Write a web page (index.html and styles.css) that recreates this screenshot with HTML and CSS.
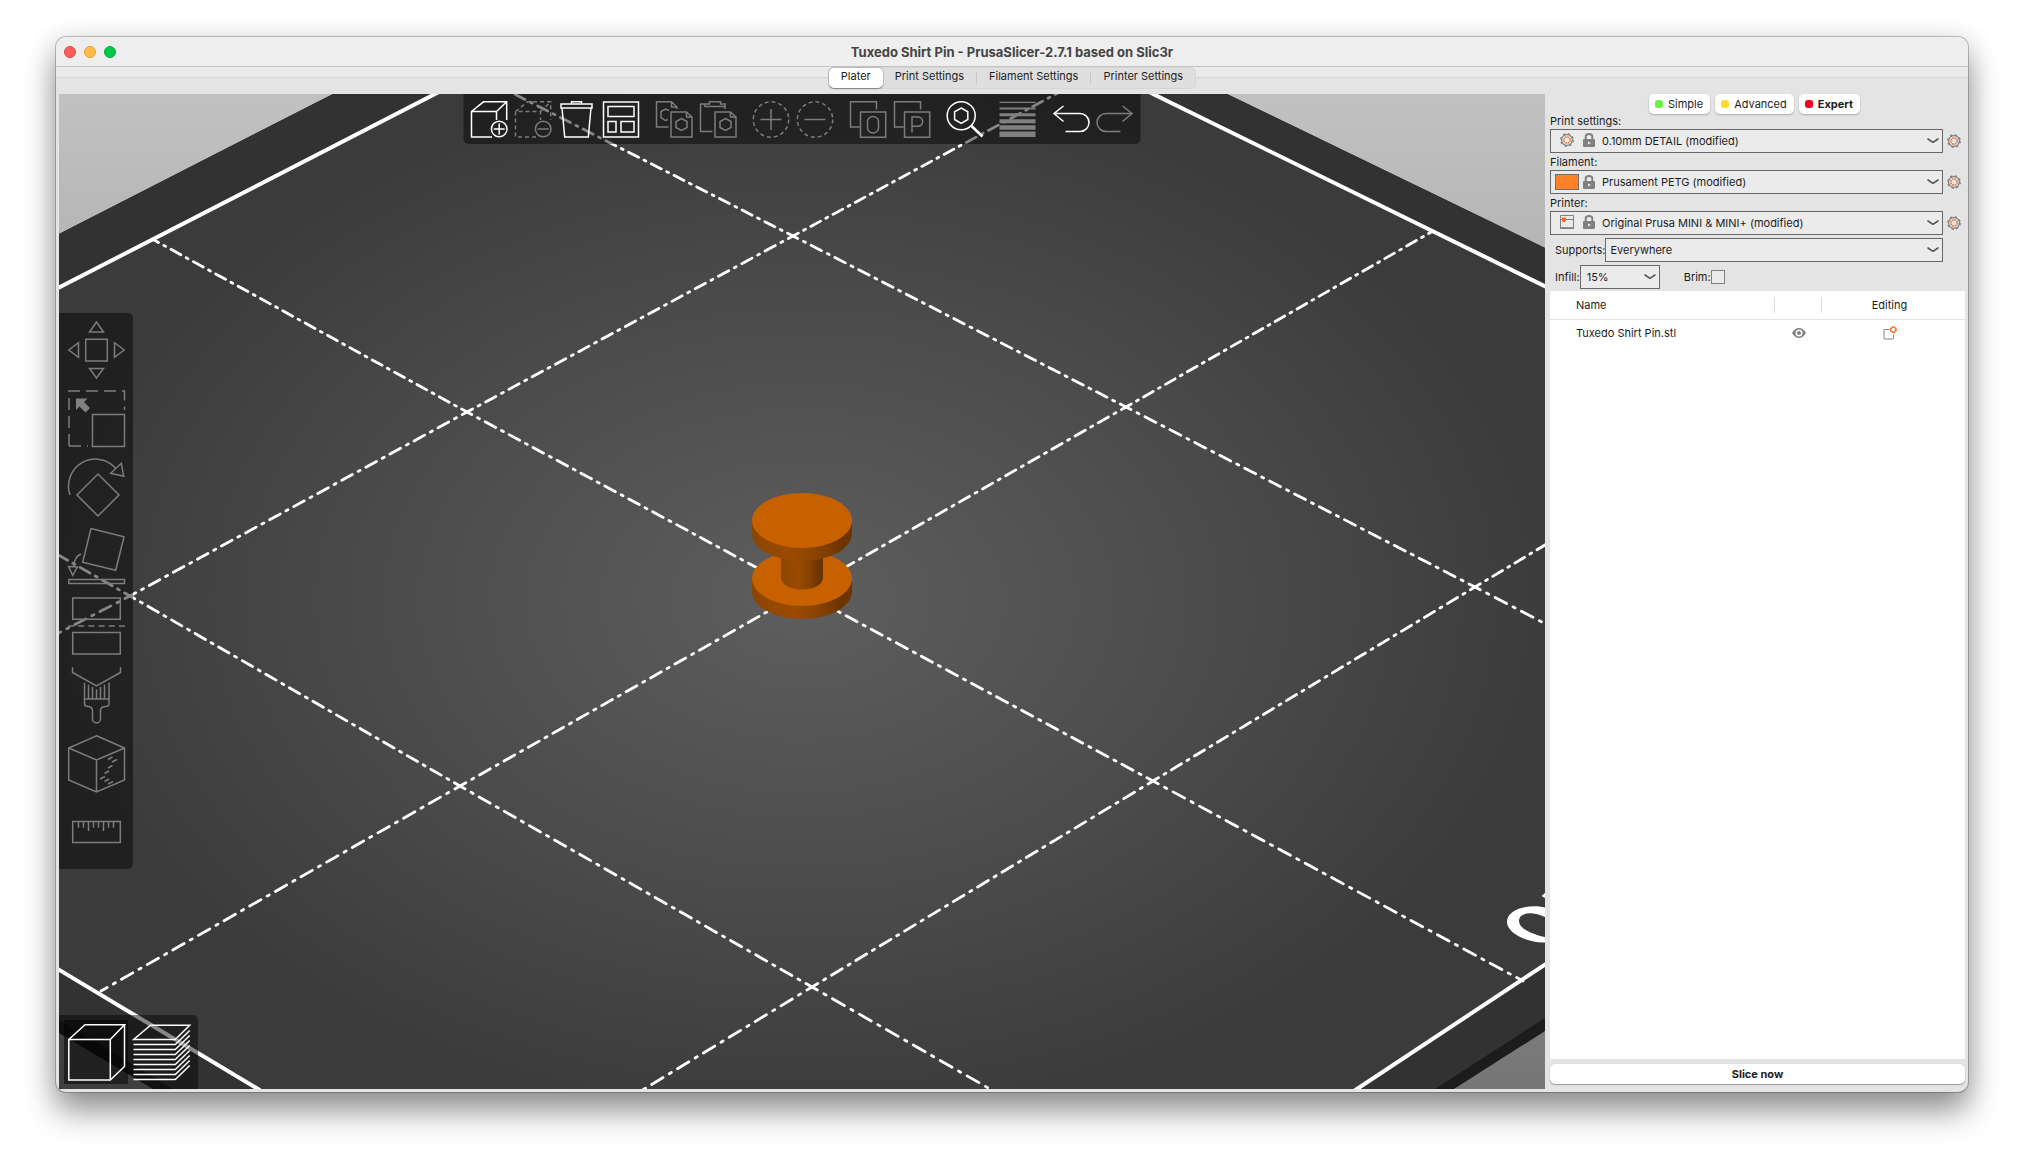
FILE: index.html
```html
<!DOCTYPE html>
<html lang="en">
<head>
<meta charset="utf-8">
<title>Tuxedo Shirt Pin - PrusaSlicer-2.7.1 based on Slic3r</title>
<link rel="stylesheet" href="styles.css">
</head>
<body>
<svg class="defs" aria-hidden="true">
  <symbol id="cog" viewBox="0 0 14 14">
    <circle cx="7" cy="7" r="5.4" fill="none" stroke="#808080" stroke-width="1.2"/>
    <circle cx="7" cy="7" r="6.2" fill="none" stroke="#808080" stroke-width="1.4" stroke-dasharray="2.4 2.47"/>
    <circle cx="7" cy="7" r="3.2" fill="none" stroke="#ed6b21" stroke-width="1.3" stroke-dasharray="1.8 .7"/>
  </symbol>
  <symbol id="lock" viewBox="0 0 12 14">
    <path d="M2.700 7V3.600Q2.700 1 6 1T9.300 3.600V7" fill="none" stroke="#808080" stroke-width="2"/>
    <rect y="6" width="12" height="8" rx="1" fill="#808080"/>
    <path d="M5 8.500 8 10 5 11.500Z" fill="#ebebeb"/>
  </symbol>
  <symbol id="chevron" viewBox="0 0 12 6">
    <path d="M1 1 6 4.300 11 1" fill="none" stroke="#555" stroke-width="1.6" stroke-linecap="round" stroke-linejoin="round"/>
  </symbol>
</svg>

<div class="window">
  <header class="titlebar">
    <div class="lights">
      <button class="light close" aria-label="Close"></button>
      <button class="light minimize" aria-label="Minimize"></button>
      <button class="light zoom" aria-label="Zoom"></button>
    </div>
    <h1 class="title">Tuxedo Shirt Pin - PrusaSlicer-2.7.1 based on Slic3r</h1>
  </header>

  <nav class="tabstrip">
    <div class="tabs">
      <button class="tab active">Plater</button>
      <button class="tab">Print Settings</button>
      <button class="tab ruled">Filament Settings</button>
      <button class="tab ruled">Printer Settings</button>
    </div>
  </nav>

  <main class="main">
    <section class="scene" aria-label="3D view">
      <svg class="bed" viewBox="59 94 1486 995" preserveAspectRatio="xMidYMid slice">
        <defs>
          <linearGradient id="sky" x1="0" y1="0" x2="0" y2="1">
            <stop offset="0" stop-color="#c1c1c1"/><stop offset="1" stop-color="#767676"/>
          </linearGradient>
          <radialGradient id="plate" gradientUnits="userSpaceOnUse" cx="0" cy="0" r="1" gradientTransform="translate(802 600) scale(760 530)">
            <stop offset="0" stop-color="#5e5e5e"/><stop offset=".5" stop-color="#4d4d4d"/><stop offset="1" stop-color="#3b3b3b"/>
          </radialGradient>
          <linearGradient id="rim" x1="0" y1="0" x2="1" y2="0">
            <stop offset="0" stop-color="#8c4500"/><stop offset=".4" stop-color="#994b00"/><stop offset=".65" stop-color="#8a4300"/><stop offset=".9" stop-color="#6b3400"/>
          </linearGradient>
        </defs>
        <rect x="59" y="94" width="1486" height="995" fill="url(#sky)"/>
        <path fill="#1c1c1c" d="M59 234 333 94H1227L1545 248V1031L1454 1089H153L59 1033Z"/>
        <path fill="#323232" d="M59 234 333 94H1227L1545 248V1018L1435 1089H173L59 1020Z"/>
        <path fill="url(#plate)" stroke="#fff" stroke-width="4" d="M31 302 435 94 794 -90 1153 94 1573 300V946L1357 1089 802 1450 258 1089 31 953Z"/>
        <g class="grid">
          <path pathLength="350" d="M154 240 467 412"/><path pathLength="350" d="M467 412 802 592"/><path pathLength="350" d="M802 592 1153 781"/><path pathLength="350" d="M1153 781 1523 981"/>
          <path pathLength="350" d="M475 74 793 236"/><path pathLength="350" d="M793 236 1126 407"/><path pathLength="350" d="M1126 407 1475 587"/><path pathLength="350" d="M1475 587 1844 780"/>
          <path pathLength="350" d="M-182 417 130 596"/><path pathLength="350" d="M130 596 460 786"/><path pathLength="350" d="M460 786 812 987"/><path pathLength="350" d="M812 987 1189 1203"/>
          <path pathLength="350" d="M1433 231 1126 407"/><path pathLength="350" d="M1126 407 802 592"/><path pathLength="350" d="M802 592 460 786"/><path pathLength="350" d="M460 786 101 991"/>
          <path pathLength="350" d="M1104 68 793 236"/><path pathLength="350" d="M793 236 467 412"/><path pathLength="350" d="M467 412 130 596"/><path pathLength="350" d="M130 596 -221 778"/>
          <path pathLength="350" d="M1785 401 1475 587"/><path pathLength="350" d="M1475 587 1153 781"/><path pathLength="350" d="M1153 781 812 987"/><path pathLength="350" d="M812 987 450 1207"/>
        </g>
        <path fill="#fff" d="M1545 907.500C1530 904 1507 908 1507 922 1507 934 1530 943.500 1545 942.500V937C1534 935 1519 929 1519 921 1519 912 1533 911 1545 917ZM1541.500 896 1545 893V898Z"/>
        <path fill="url(#rim)" d="M752 578.500V591.500A50 27.500 0 0 0 852 591.500V578.500Z"/>
        <ellipse cx="802" cy="578.500" rx="50" ry="27.500" fill="#c76100"/>
        <path fill="url(#rim)" d="M781 540V578A21 11.600 0 0 0 823 578V540Z"/>
        <path fill="url(#rim)" d="M752 520.500V533.500A50 27.500 0 0 0 852 533.500V520.500Z"/>
        <ellipse cx="802" cy="520.500" rx="50" ry="27.500" fill="#c76100"/>
      </svg>

      <div class="toolbar top">
        <div class="group">
          <button class="tool" aria-label="Add"><svg viewBox="0 0 37 37"><path d="M21.500 36H1V10.500H26V19M1 10.500 13 .8H36.200V19M26 10.500 36.200.8"/><circle cx="28.700" cy="28" r="7.800"/><path d="M28.700 22.500V33.500M23.200 28H34.200"/></svg></button>
          <button class="tool dim" aria-label="Delete"><svg viewBox="0 0 37 37"><path stroke-dasharray="4 3" d="M21.500 36H1V10.500H26V19M1 10.500 13 .8H36.200V19M26 10.500 36.200.8"/><circle cx="28.700" cy="28" r="7.800"/><path d="M23.200 28H34.200"/></svg></button>
          <button class="tool" aria-label="Delete all"><svg viewBox="0 0 37 37"><path d="M2.500 3H33.500V7H2.500ZM13 3V.8H23V3M3.500 7 6.200 36H29.800L32.500 7"/></svg></button>
          <button class="tool" aria-label="Arrange"><svg viewBox="0 0 37 37"><path d="M1 1H36V36H1ZM5.500 5.500H31.500V15.500H5.500ZM5.500 20.500H13.500V31H5.500ZM18.500 20.500H31.500V31H18.500Z"/></svg></button>
        </div>
        <div class="group">
          <button class="tool dim" aria-label="Copy"><svg viewBox="0 0 37 37"><path d="M13 26H1V.8H16L21.500 6V8M16 .8V6H21.500M12.500 18.500 10 19.500 5.500 16.500V10.500L10 8 13.500 9.500M15.500 11H31L36.500 16V36H15.500ZM31 11V16H36.500M26 17.500 31.500 20.500V26.500L26 29.500 20.500 26.500V20.500Z"/></svg></button>
          <button class="tool dim" aria-label="Paste"><svg viewBox="0 0 37 37"><path d="M13 30.500H1V3H5.500M25 3H25.500V8M5.500 5.500V3H10V.8H21V3H25.500V5.500ZM15.500 11H31L36.500 16V36H15.500ZM31 11V16H36.500M26 17.500 31.500 20.500V26.500L26 29.500 20.500 26.500V20.500Z"/></svg></button>
        </div>
        <div class="group">
          <button class="tool dim" aria-label="Add instance"><svg viewBox="0 0 37 37"><circle cx="18.500" cy="18.500" r="17.700" stroke-dasharray="4 2.950"/><path d="M18.500 8V29M8 18.500H29"/></svg></button>
          <button class="tool dim" aria-label="Remove instance"><svg viewBox="0 0 37 37"><circle cx="18.500" cy="18.500" r="17.700" stroke-dasharray="4 2.950"/><path d="M8 18.500H29"/></svg></button>
        </div>
        <div class="group">
          <button class="tool dim" aria-label="Split to objects"><svg viewBox="0 0 37 37"><path d="M10 26H1V.8H27V8.500M11 11H36.200V36.200H11ZM18 20.500A5.500 5 0 0 1 29 20.500V27A5.500 5 0 0 1 18 27Z"/></svg></button>
          <button class="tool dim" aria-label="Split to parts"><svg viewBox="0 0 37 37"><path d="M10 26H1V.8H27V8.500M11 11H36.200V36.200H11ZM18.500 31.500V16H24.500A4.600 4.600 0 0 1 24.500 25.200H18.500"/></svg></button>
        </div>
        <div class="group">
          <button class="tool" aria-label="Search"><svg viewBox="0 0 37 37"><circle cx="14.700" cy="14.700" r="14"/><path d="M14.700 7 21.300 10.800V18.500L14.700 22.300 8.100 18.500V10.800Z"/><path stroke-width="2.600" d="M25 25 36 35.500"/></svg></button>
        </div>
        <div class="group">
          <button class="tool dim" aria-label="Variable layer height"><svg viewBox="0 0 37 37"><path fill="#808080" stroke="none" d="M0 .8H36V2H0ZM0 6.500H36V8.500H0ZM0 12.300H36V15.300H0ZM0 18.300H36V22.300H0ZM0 24.300H36V28.800H0ZM0 30.500H36V36H0Z"/></svg></button>
        </div>
        <div class="group">
          <button class="tool" aria-label="Undo"><svg viewBox="0 0 37 37"><path d="M11 5 1.500 12.500 11 20.500M1.500 12.500H27.500A9 9 0 0 1 27.500 30.500H13"/></svg></button>
          <button class="tool dim" aria-label="Redo"><svg viewBox="0 0 37 37"><path d="M26 5 35.500 12.500 26 20.500M35.500 12.500H9.500A9 9 0 0 0 9.500 30.500H24"/></svg></button>
        </div>
      </div>

      <div class="toolbar left">
        <button class="tool big dim" aria-label="Move"><svg viewBox="0 0 57 57"><path d="M17.700 18.300H39.300V40H17.700ZM28.500 1 21.500 11H35.500ZM28.500 57 21.500 47.500H35.500ZM.8 29 10.500 21.700V36.300ZM56.200 29 46.500 21.700V36.300Z"/></svg></button>
        <button class="tool big dim" aria-label="Scale"><svg viewBox="0 0 57 57"><path stroke-dasharray="12 6" d="M1 56V1H56.500V20M1 56H20"/><path d="M24.500 24.500H56.500V56.500H24.500Z"/><path fill="#808080" stroke="none" d="M8 8.500H19.500L16 12 22 18 17.500 22.500 11.500 16.500 8 20Z"/></svg></button>
        <button class="tool big dim" aria-label="Rotate"><svg viewBox="0 0 57 57"><path d="M2 36A27 27 0 0 1 47.500 9M53.300 4.300 42.700 14.300 55.700 17.300ZM30 15 51 36 30 57 9 36Z"/></svg></button>
        <button class="tool big dim" aria-label="Place on face"><svg viewBox="0 0 57 57"><path d="M23 .6 56 8.700 47.700 42.300 14.700 34.300ZM13 26Q7 28 5.500 38M.5 38.500 9.300 39 4.700 47.300ZM.8 51.500H56.500V55.500H.8Z"/></svg></button>
        <button class="tool big dim" aria-label="Cut"><svg viewBox="0 0 57 57"><path d="M4.700 1H52.300V22.300H4.700ZM4.700 35.500H52.300V57H4.700Z"/><path stroke-dasharray="6 4.200" d="M0 29H57"/></svg></button>
        <button class="tool big dim" aria-label="Paint-on supports"><svg viewBox="0 0 57 57"><path d="M4.500 1.300V6.500L28.500 20 52.500 6.500V1.300M16.500 33H41M16.500 16.700V37.500Q16.500 40.500 19.500 40.500 24.500 40.500 24.500 45V53A4 4 0 0 0 32.500 53V45Q32.500 40.500 37.500 40.500 41 40.500 41 37.500V16.700M20.500 18.700V33M24.500 21V33M28.500 23.300V33M32.500 21V33M36.500 18.700V33"/></svg></button>
        <button class="tool big dim" aria-label="Seam painting"><svg viewBox="0 0 57 57"><path d="M28.500.7 56.500 13V45L28.500 57 .7 45V13ZM.7 13 28.500 25 56.500 13M28.500 25V57"/><path d="M40 24.500 44.500 22M44 27 49 24.500M40 33 44.500 30.500M36.500 38.500 41 36M32 44 37 41.500M36.500 46.500 41 44M40 49 45 46.500"/></svg></button>
        <button class="tool big dim" aria-label="Measure"><svg viewBox="0 0 57 57"><path d="M4.700 17.500H52.300V38.500H4.700ZM10.500 17.500V23.700M15.500 17.500V23.700M20.500 17.500V27M25.500 17.500V23.700M30.500 17.500V23.700M35.500 17.500V27M40.500 17.500V23.700M45.500 17.500V23.700"/></svg></button>
      </div>

      <div class="toolbar views">
        <button class="view selected" aria-label="3D editor view"><svg viewBox="0 0 57 57"><path d="M.8 15.500H42.300V56H.8ZM.8 15.500 17 .8H56.500L42.300 15.500M56.500.8V42.500L42.300 56"/></svg></button>
        <button class="view" aria-label="Preview"><svg viewBox="0 0 57 57"><path d="M17.500 1.300H56.700L42.300 15.500H.7ZM.5 20.500H42.300L56.700 6.500M.5 25.500H42.300L56.700 11.500M.5 30.500H42.300L56.700 16.500M.5 35.500H42.300L56.700 21.500M.5 40.500H42.300L56.700 26.500M.5 45.500H42.300L56.700 31.500M.5 50.500H42.300L56.700 36.500M.5 55.500H42.300L56.700 41.500"/></svg></button>
      </div>
    </section>

    <aside class="sidebar">
      <div class="modes">
        <button class="mode"><span class="dot simple"></span>Simple</button>
        <button class="mode"><span class="dot advanced"></span>Advanced</button>
        <button class="mode current"><span class="dot expert"></span>Expert</button>
      </div>

      <div class="preset">
        <label for="print">Print settings:</label>
        <div class="preset-row">
          <div class="combo with-icons">
            <select id="print"><option>0.10mm DETAIL (modified)</option></select>
            <span class="marks"><svg class="mark"><use href="#cog"/></svg><svg class="lock"><use href="#lock"/></svg></span>
            <svg class="chevron"><use href="#chevron"/></svg>
          </div>
          <button class="edit" aria-label="Edit print settings"><svg><use href="#cog"/></svg></button>
        </div>
      </div>
      <div class="preset">
        <label for="filament">Filament:</label>
        <div class="preset-row">
          <div class="combo with-icons">
            <select id="filament"><option>Prusament PETG (modified)</option></select>
            <span class="marks"><span class="swatch"></span><svg class="lock"><use href="#lock"/></svg></span>
            <svg class="chevron"><use href="#chevron"/></svg>
          </div>
          <button class="edit" aria-label="Edit filament"><svg><use href="#cog"/></svg></button>
        </div>
      </div>
      <div class="preset">
        <label for="printer">Printer:</label>
        <div class="preset-row">
          <div class="combo with-icons">
            <select id="printer"><option>Original Prusa MINI &amp; MINI+ (modified)</option></select>
            <span class="marks"><svg class="mark" viewBox="0 0 14 14"><path d="M.5.5H13.500V13H.5ZM.5 4.500H13.500" fill="none" stroke="#808080"/><path d="M0 12.300H14V14H0Z" fill="#808080"/><path d="M2 2.500H6V6.500H5L4 7.500 3 6.500H2Z" fill="#ed6b21"/></svg><svg class="lock"><use href="#lock"/></svg></span>
            <svg class="chevron"><use href="#chevron"/></svg>
          </div>
          <button class="edit" aria-label="Edit printer"><svg><use href="#cog"/></svg></button>
        </div>
      </div>

      <div class="options">
        <label for="supports">Supports:</label>
        <div class="combo grow">
          <select id="supports"><option>Everywhere</option></select>
          <svg class="chevron"><use href="#chevron"/></svg>
        </div>
      </div>
      <div class="options">
        <label for="infill">Infill:</label>
        <div class="combo infill">
          <select id="infill"><option>15%</option></select>
          <svg class="chevron"><use href="#chevron"/></svg>
        </div>
        <label class="brim" for="brim">Brim:</label>
        <input class="check" type="checkbox" id="brim">
      </div>

      <div class="objects">
        <table class="list">
          <colgroup><col class="col-name"><col class="col-eye"><col></colgroup>
          <thead><tr><th class="name">Name</th><th aria-label="Visible"></th><th class="last">Editing</th></tr></thead>
          <tbody>
            <tr>
              <td class="name">Tuxedo Shirt Pin.stl</td>
              <td><svg class="eye" viewBox="0 0 14 10"><path fill="#808080" fill-rule="evenodd" d="M0 5Q3 0 7 0T14 5Q11 10 7 10T0 5ZM7 1.500A3.500 3.500 0 0 0 7 8.500 3.500 3.500 0 0 0 7 1.500Z"/><circle cx="7" cy="5" r="2" fill="#808080"/></svg></td>
              <td class="last"><svg class="editing" viewBox="0 0 14 14"><path d="M6.500 3.500H2Q1 3.500 1 4.500V12Q1 13 2 13H9.500Q10.500 13 10.500 12V8.500" fill="none" stroke="#808080"/><circle cx="10.300" cy="3.700" r="2.600" fill="none" stroke="#ed6b21" stroke-width="1.800" stroke-dasharray="1.700 .35"/></svg></td>
            </tr>
          </tbody>
        </table>
      </div>

      <button class="slice">Slice now</button>
    </aside>
  </main>
</div>
</body>
</html>
```
FILE: styles.css
```css
* { box-sizing: border-box; }

body {
  margin: 0;
  min-height: 100vh;
  padding: 37px 56px 74px;
  display: flex;
  background: #fff;
  color: #1c1c1c;
  font: 11px/14px Inter, "Liberation Sans", sans-serif;
}

button, select, input { font: inherit; color: inherit; margin: 0; }
button { border: 0; padding: 0; background: none; }
svg { display: block; }
.defs { position: absolute; width: 0; height: 0; }

.window {
  flex: 1;
  min-width: 0;
  display: flex;
  flex-direction: column;
  background: #e4e4e4;
  border-radius: 10px;
  overflow: hidden;
  box-shadow: 0 0 0 1px rgba(0, 0, 0, .22), 0 20px 32px rgba(0, 0, 0, .38), 0 4px 28px rgba(0, 0, 0, .16);
}

.titlebar {
  height: 30px;
  display: grid;
  grid-template-columns: 1fr auto 1fr;
  align-items: center;
  padding: 0 8px;
  background: #eee;
  border-bottom: 1px solid #c4c4c4;
}
.lights { display: flex; gap: 8px; }
.light { width: 12px; height: 12px; border-radius: 50%; border: 1px solid; }
.close { background: #ff5f5a; border-color: #e2463f; }
.minimize { background: #ffbd43; border-color: #dfa032; }
.zoom { background: #00c94a; border-color: #0aab3c; }
.title { margin: 0; font-size: 13px; line-height: 16px; font-weight: 700; color: #444; }

.tabstrip {
  height: 27px;
  display: flex;
  justify-content: center;
  align-items: flex-start;
  background: linear-gradient(#ebebeb 10px, #d8d8d8 10px 11px, #e4e4e4 11px);
}
.tabs {
  display: flex;
  padding: 1px;
  background: #dfdfdf;
  border-radius: 6px;
  box-shadow: inset 0 0 0 1px #d6d6d6;
}
.tab { height: 20px; padding: 0 12px 4px; }
.tab.active { background: #fff; border-radius: 5px; box-shadow: 0 0 1px 1px rgba(0, 0, 0, .14), 0 1px 1px rgba(0, 0, 0, .3); }
.tab.ruled { padding-left: 13px; background: linear-gradient(#c8c8c8, #c8c8c8) left center / 1px 12px no-repeat; }

.main {
  flex: 1;
  display: grid;
  grid-template-columns: minmax(0, 1fr) 423px;
  padding: 0 0 3px 3px;
}

.scene { position: relative; overflow: hidden; }
.bed { position: absolute; inset: 0; width: 100%; height: 100%; }
.grid path {
  fill: none;
  stroke: #fff;
  stroke-width: 2.8;
  stroke-linecap: round;
  stroke-dasharray: 11 6 2 6;
  stroke-dashoffset: 6;
}

.toolbar { position: absolute; display: flex; background: rgba(5, 5, 5, .48); }
.toolbar.top {
  top: 0;
  left: 50%;
  transform: translateX(-50%);
  gap: 16px;
  padding: 7px 7px 6px;
  border-radius: 0 0 5px 5px;
}
.group { display: flex; gap: 7px; }
.toolbar.left {
  left: 0;
  top: 219px;
  flex-direction: column;
  gap: 12px;
  padding: 8px 8px 8px 9px;
  border-radius: 0 5px 5px 0;
}
.toolbar.views { left: 0; bottom: 0; gap: 1px; padding: 5px; border-radius: 0 5px 0 0; }
.toolbar svg { width: 100%; height: 100%; fill: none; stroke: #fff; stroke-width: 1.5; overflow: visible; }
.tool { width: 37px; height: 37px; }
.tool.big { width: 57px; height: 57px; }
.toolbar .dim svg { stroke: #7c7c7c; }
.view { width: 64px; height: 64px; padding: 4px 3px 3px 4px; }
.view.selected { background: rgba(0, 0, 0, .5); }

.sidebar { display: flex; flex-direction: column; padding: 0 3px 5px 5px; min-width: 0; }

.modes { display: flex; justify-content: center; gap: 5px; margin: 0 6px 0 0; }
.mode {
  height: 20px;
  display: flex;
  align-items: center;
  gap: 5px;
  padding: 0 7px 0 6px;
  background: #fff;
  border-radius: 5px;
  box-shadow: 0 1px 2px rgba(0, 0, 0, .25);
}
.mode.current { font-weight: 700; }
.dot { width: 8px; height: 8px; border-radius: 3px; }
.simple { background: #6cf046; }
.advanced { background: #ffdc32; }
.expert { background: #f5001e; }

.preset > label { display: block; height: 15px; line-height: 15px; }
.preset + .preset { margin-top: 2px; }
.preset-row { display: flex; align-items: center; gap: 4px; padding-right: 4px; }
.preset-row .combo { flex: 1; }
.edit, .edit svg { width: 14px; height: 14px; }

.combo { position: relative; }
.combo select {
  appearance: none;
  display: block;
  width: 100%;
  height: 24px;
  padding: 0 24px 0 4px;
  border: 1px solid #686868;
  border-radius: 0;
  background: #ebebeb;
}
.combo.with-icons select { padding-left: 51px; }
.combo .chevron { position: absolute; right: 4px; top: 9px; width: 12px; height: 6px; pointer-events: none; }
.marks { position: absolute; left: 5px; top: 4px; display: flex; align-items: center; gap: 4px; pointer-events: none; }
.mark { width: 14px; height: 14px; margin: 0 5px; }
.swatch { width: 24px; height: 16px; background: #ff8128; border: 1px solid #6e6e6e; }
.lock { width: 12px; height: 14px; }

.options { display: flex; align-items: center; margin: 3px 22px 0 5px; }
.grow { flex: 1; }
.infill { width: 80px; }
.infill select { padding-left: 6px; }
.brim { margin-left: 24px; }
.check { appearance: none; width: 14px; height: 14px; border: 1px solid #808080; background: #ebebeb; }

.objects { flex: 1; margin-top: 2px; background: #fff; }
.list { width: 100%; table-layout: fixed; border-collapse: collapse; }
.col-name { width: 225px; }
.col-eye { width: 47px; }
.list th { height: 28px; padding: 0; font-weight: 400; border-bottom: 1px solid #e2e2e2; }
.list th:not(:last-child) { background: linear-gradient(#dcdcdc, #dcdcdc) right center / 1px 16px no-repeat; }
.list td { height: 28px; padding: 0; text-align: center; }
.list .name { text-align: left; padding-left: 26px; }
.list .last { padding-right: 8px; }
.eye { width: 14px; height: 10px; margin: 0 auto; }
.editing { width: 14px; height: 14px; margin: 0 auto; }

.slice {
  height: 20px;
  margin-top: 5px;
  font-weight: 700;
  background: #fff;
  border-radius: 5px;
  box-shadow: 0 1px 1px rgba(0, 0, 0, .3), 0 0 1px rgba(0, 0, 0, .2);
}
```
